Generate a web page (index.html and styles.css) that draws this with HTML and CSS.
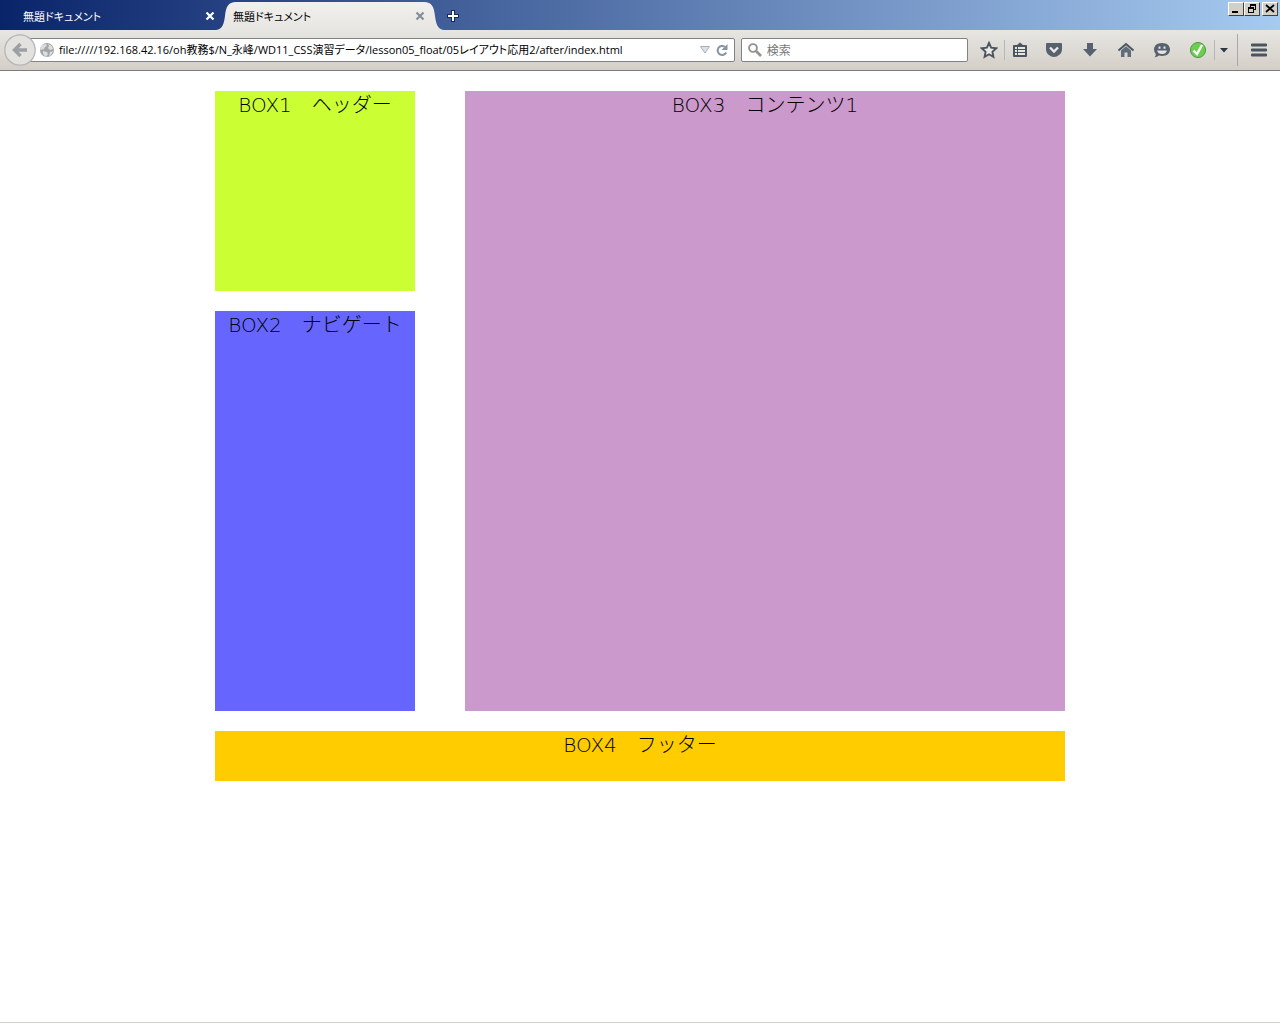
FILE: index.html
```
<!DOCTYPE html>
<html lang="ja">
<head>
<meta charset="utf-8">
<title>無題ドキュメント</title>
<link rel="stylesheet" href="styles.css">
</head>
<body>
<header class="browser">
  <div class="tabstrip">
    <div class="tab">
      <a class="tab-title" href="#">無題ドキュメント</a>
      <button class="close" aria-label="タブを閉じる"><svg width="10" height="10" viewBox="0 0 10 10"><path d="M1.500 1.500l7 7M8.500 1.500l-7 7" stroke="#fff" stroke-width="2.2"/></svg></button>
    </div>
    <div class="tab-active">
      <svg class="edge" width="20" height="28" viewBox="0 0 20 28"><path d="M0 28C7 27 8 21 9 14C10 5 12 0 20 0V28Z" fill="url(#tabfill)"/><defs><linearGradient id="tabfill" x1="0" y1="0" x2="0" y2="1"><stop offset="0" stop-color="#f1f0ee"/><stop offset="1" stop-color="#e7e6e2"/></linearGradient></defs></svg>
      <div class="tab-body">
        <a class="tab-title" href="#">無題ドキュメント</a>
        <button class="close" aria-label="タブを閉じる"><svg width="10" height="10" viewBox="0 0 10 10"><path d="M1.500 1.500l7 7M8.500 1.500l-7 7" stroke="#868e96" stroke-width="2.2"/></svg></button>
      </div>
      <svg class="edge" width="20" height="28" viewBox="0 0 20 28"><path d="M20 28C13 27 12 21 11 14C10 5 8 0 0 0V28Z" fill="url(#tabfill)"/></svg>
    </div>
    <button class="newtab" aria-label="新しいタブ"><svg width="14" height="14" viewBox="0 0 14 14"><path d="M7 1v12M1 7h12" stroke="#14285c" stroke-width="4"/><path d="M7 2v10M2 7h10" stroke="#fff" stroke-width="2"/></svg></button>
    <div class="window-buttons">
      <button class="win" aria-label="最小化"><svg width="12" height="10" viewBox="0 0 12 10" shape-rendering="crispEdges"><path d="M2 7h6v2H2z"/></svg></button>
      <button class="win" aria-label="元に戻す"><svg width="12" height="10" viewBox="0 0 12 10" shape-rendering="crispEdges"><path d="M4 0h6v6H8V5h1V2H5v1H4zM2 3h6v6H2zM3 5v3h4V5z" fill-rule="evenodd"/></svg></button>
      <button class="win win-close" aria-label="閉じる"><svg width="12" height="10" viewBox="0 0 12 10"><path d="M2 1l8 7M10 1L2 8" stroke="#000" stroke-width="1.7"/></svg></button>
    </div>
  </div>
  <div class="toolbar">
    <button class="back" aria-label="戻る"><svg width="32" height="32" viewBox="0 0 32 32"><circle cx="16" cy="16" r="15.2" fill="#e4e2de" stroke="#b4b6b7" stroke-width="1.3"/><path d="M10.500 16H23M16.500 10L10.500 16l6 6" stroke="#9ba0a4" stroke-width="3.400" fill="none"/></svg></button>
    <div class="field address">
      <svg width="16" height="16" viewBox="0 0 16 16"><circle cx="8" cy="8" r="7" fill="#a3a5a6"/><path d="M3 3l4-1 1 2-2 1-1 2-3 1-1-1zM9 2l4 2 1 3-3 1-2-2 1-2zM4 9l4 1 1 2-2 3-3-3zM11 10l3-1-2 4-2 1z" fill="#dcddde"/></svg>
      <input class="url" aria-label="アドレス" value="file://///192.168.42.16/oh教務$/N_永峰/WD11_CSS演習データ/lesson05_float/05レイアウト応用2/after/index.html">
      <svg width="10" height="8" viewBox="0 0 10 8"><path d="M.5.5h9L5 7z" fill="#dce2ec" stroke="#a7b0ba"/></svg>
      <button class="close reload" aria-label="再読み込み"><svg width="14" height="14" viewBox="0 0 14 14"><path d="M11.200 9.500A4.500 4.500 0 1 1 9.800 3.800" fill="none" stroke="#8696a3" stroke-width="2"/><path d="M12.500 1v6H6.500z" fill="#8696a3"/></svg></button>
    </div>
    <div class="field search">
      <svg width="14" height="14" viewBox="0 0 14 14"><circle cx="5" cy="5" r="3.900" fill="none" stroke="#929292" stroke-width="1.900"/><path d="M8 8l5 5" stroke="#929292" stroke-width="2.600"/></svg>
      <input class="query" aria-label="検索" placeholder="検索">
    </div>
    <div class="tools">
      <button class="tool star" aria-label="ブックマーク"><svg width="18" height="18" viewBox="0 0 18 18"><path d="M9 2l2.100 4.700 5.100.6-3.800 3.500 1 5.100L9 13.300l-4.400 2.600 1-5.100L1.800 7.300l5.100-.6z" fill="#eceae7" stroke="#4b5560" stroke-width="1.900"/></svg></button>
      <button class="tool list" aria-label="ブックマーク一覧"><svg width="16" height="16" viewBox="0 0 16 16"><path d="M2 3h3l3-2.500L11 3h3q1 0 1 1v10q0 1-1 1H2q-1 0-1-1V4q0-1 1-1z" fill="#4b5560"/><path d="M3 5h2v2H3zM6 5h7v2H6zM3 8h2v2H3zM6 8h7v2H6zM3 11h2v2H3zM6 11h7v2H6z" fill="#e6e4e0"/></svg></button>
      <button class="tool" aria-label="Pocket"><svg width="18" height="16" viewBox="0 0 18 16"><path d="M2 1h14q1 0 1 1v5q0 4-3 6-2 2-5 2t-5-2q-3-2-3-6V2q0-1 1-1z" fill="#56626f"/><path d="M5 5.500l4 4 4-4" stroke="#eceae7" stroke-width="2.300" fill="none"/></svg></button>
      <button class="tool" aria-label="ダウンロード"><svg width="16" height="16" viewBox="0 0 16 16"><path d="M5 1h6v6h4l-7 7.500L1 7h4z" fill="#56626f"/></svg></button>
      <button class="tool" aria-label="ホーム"><svg width="18" height="16" viewBox="0 0 18 16"><path d="M1.500 8.500L9 2l7.500 6.500" stroke="#4b5560" stroke-width="2" fill="none"/><path d="M4 8.500l5-4.300 5 4.300V15h-3.500v-4.500h-3V15H4z" fill="#5f6d7a"/></svg></button>
      <button class="tool" aria-label="チャット"><svg width="18" height="16" viewBox="0 0 18 16"><path d="M9 1c5 0 8 2.800 8 6.500S14 14 9 14q-2 0-3-.4Q4 15.300 1.500 15.300 3 14 2.800 12 1 10 1 7.500C1 3.800 4 1 9 1z" fill="#56626f"/><path d="M5.500 4.500h2v2.300h-2zM10.500 4.500h2v2.300h-2zM4 8.500h10q-1 3.500-5 3.500t-5-3.500z" fill="#e6e4e0"/></svg></button>
      <button class="tool" aria-label="サイト評価"><svg width="18" height="18" viewBox="0 0 18 18"><circle cx="9" cy="9" r="7.600" fill="#6cce50" stroke="#4b9d43"/><path d="M4.500 9.500L8 13l5-9" stroke="#fff" stroke-width="2.400" fill="none"/></svg></button>
      <button class="tool caret" aria-label="評価メニュー"><svg width="8" height="5" viewBox="0 0 8 5"><path d="M0 0h8L4 4.500z" fill="#2d3742"/></svg></button>
      <button class="tool menu" aria-label="メニュー"><svg width="16" height="14" viewBox="0 0 16 14"><path d="M1 2h14M1 7h14M1 12h14" stroke="#4b5560" stroke-width="2.800" stroke-linecap="round"/></svg></button>
    </div>
  </div>
</header>
<main class="page">
  <div class="layout">
    <div class="side">
      <div class="box box1">BOX1　ヘッダー</div>
      <div class="box box2">BOX2　ナビゲート</div>
    </div>
    <div class="box box3">BOX3　コンテンツ1</div>
    <div class="box box4">BOX4　フッター</div>
  </div>
</main>
</body>
</html>
```
FILE: styles.css
```
* { box-sizing: border-box; }
body {
  margin: 0;
  min-height: 100vh;
  display: flex;
  flex-direction: column;
  background: #fff;
  color: #000;
  font: 12px/16px "Open Sans", "Noto Sans CJK JP", sans-serif;
}
button { display: flex; align-items: center; justify-content: center; padding: 0; border: 0; background: none; }
svg { display: block; flex: none; }

.tabstrip {
  display: flex;
  align-items: flex-end;
  height: 30px;
  background: linear-gradient(90deg, #0a246a, #a6caf0);
}
.tab { display: flex; align-items: center; width: 216px; height: 28px; padding-left: 23px; }
.tab .tab-title { color: #fff; }
.tab-title {
  flex: 1;
  color: #000;
  font-family: "Noto Sans CJK JP", sans-serif;
  font-size: 11px;
  font-feature-settings: "palt";
  text-decoration: none;
}
.close { width: 12px; height: 16px; }
.tab-active { display: flex; width: 228px; height: 28px; }
.tab-body {
  flex: 1;
  display: flex;
  align-items: center;
  background: linear-gradient(#f1f0ee, #e7e6e2);
}
.tab-body .tab-title { margin-left: -3px; }
.tab-body .close { margin-right: -2px; }
.newtab { width: 18px; height: 28px; }
.window-buttons { display: flex; align-self: flex-start; margin-left: auto; padding: 2px 2px 0 0; }
.win {
  width: 16px;
  height: 14px;
  background: #d4d0c8;
  border: 1px solid;
  border-color: #fff #404040 #404040 #fff;
}
.win-close { margin-left: 2px; }

.toolbar {
  display: flex;
  align-items: center;
  height: 41px;
  padding-left: 4px;
  background: linear-gradient(#e7e6e2, #d4cec7);
  border-bottom: 1px solid #7c7b7d;
}
.back { z-index: 1; width: 32px; height: 32px; }
.field {
  display: flex;
  align-items: center;
  height: 24px;
  background: #fff;
  border: 1px solid #7f8287;
  border-radius: 2px;
}
.field input { flex: 1; min-width: 0; padding: 0; border: 0; outline: 0; background: none; }
.address { flex: 708; min-width: 0; margin-left: -7px; padding: 0 5px 0 9px; }
.url { margin-left: 4px; color: #000; font: 11px/16px "Open Sans", "Noto Sans CJK JP", sans-serif; font-feature-settings: "palt"; }
.reload { width: 14px; margin-left: 5px; }
.search { flex: 225; min-width: 0; margin-left: 6px; padding-left: 6px; }
.query { margin-left: 5px; font: 12px/16px "Noto Sans CJK JP", sans-serif; }
.query::placeholder { color: #777; opacity: 1; }
.tools { display: flex; align-items: center; margin-left: 6px; }
.tool { width: 36px; height: 20px; }
.star { width: 30px; }
.list { width: 30px; margin-right: 2px; border-left: 1px solid #b3b7ba; }
.caret { width: 18px; margin-left: -2px; border-left: 1px solid #b3b7ba; }
.menu { width: 43px; height: 32px; margin-left: 5px; border-left: 1px solid #a5a8ac; }

.page { flex: 1; margin-bottom: 1px; padding: 20px; border-bottom: 1px solid #d4d0c8; }
.layout {
  display: grid;
  grid-template-columns: 4fr 12fr;
  gap: 20px 50px;
  max-width: 850px;
  margin: 0 auto;
}
.side { display: flex; flex-direction: column; gap: 20px; }
.box { font: 200 20px/28px "DejaVu Sans", "Noto Sans CJK JP", sans-serif; text-align: center; }
.box1 { min-height: 200px; background: #cf3; }
.box2 { min-height: 400px; background: #66f; }
.box3 { background: #c9c; }
.box4 { grid-column: 1 / -1; min-height: 50px; background: #fc0; }
```
